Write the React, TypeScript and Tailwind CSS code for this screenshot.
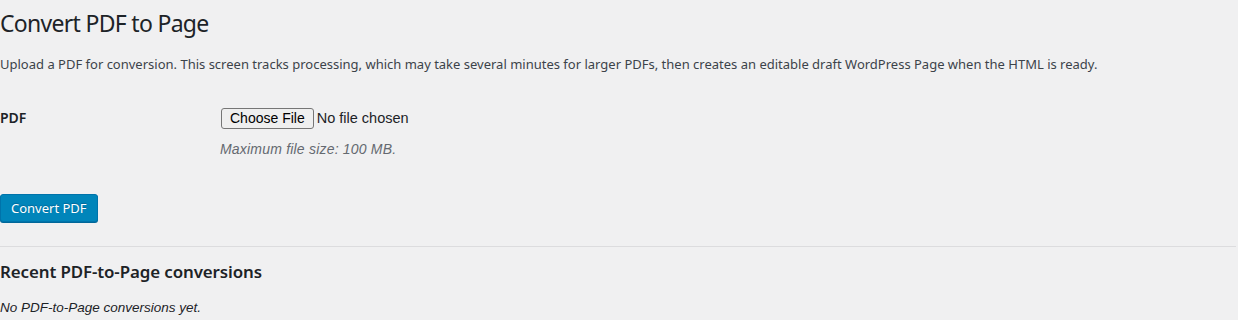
export default function App() {
  return (
    <div
      className="min-h-[320px] w-full bg-[#f0f0f1] text-[13px] leading-[1.4em] text-[#3c434a]"
      style={{ fontFamily: '"Noto Sans", "Liberation Sans", Arial, sans-serif' }}
    >
      <div className="pr-[2px]">
        <h1 className="pt-[9px] pb-1 text-[23px] font-normal leading-[1.3] tracking-[-0.7px] text-[#1d2327]">
          Convert PDF to Page
        </h1>
        <p className="mt-[12px] mb-[16px]">
          Upload a PDF for conversion. This screen tracks processing, which may take several minutes for larger PDFs, then creates an editable draft WordPress Page when the HTML is ready.
        </p>
        <div className="flex">
          <div className="w-[210px] shrink-0 py-5 pr-2.5 text-[14px] font-semibold leading-[18.2px] text-[#1d2327]">
            PDF
          </div>
          <div className="py-[15px] px-2.5">
            <div
              className="flex h-[28px] items-center text-[14px] text-[#1d2327]"
              style={{ fontFamily: '"Liberation Sans", Arial, sans-serif' }}
            >
              <span className="ml-px rounded-[3px] border border-[#767676] bg-[#efefef] px-[8px] py-[1px] leading-[17px] text-black">
                Choose File
              </span>
              <span className="ml-[3px] text-[14.5px]">No file chosen</span>
            </div>
            <p
              className="mt-[8px] text-[14px] italic leading-[18.2px] tracking-[0.2px] text-[#646970]"
              style={{ fontFamily: '"Liberation Sans", Arial, sans-serif' }}
            >
              Maximum file size: 100 MB.
            </p>
          </div>
        </div>
        <div className="mt-[21px]">
          <button className="h-[28px] rounded-[3px] border border-[#0073aa] bg-[#0085ba] px-2.5 text-[13px] leading-[26px] text-white shadow-[0_1px_0_#006799] [text-shadow:0_-1px_1px_#006799]">
            Convert PDF
          </button>
        </div>
        <hr className="mt-[24px] border-t border-[#dcdcde]" />
        <h2 className="mt-[14px] text-[16.9px] font-semibold leading-[22px] tracking-[-0.1px] text-[#1d2327]">
          Recent PDF-to-Page conversions
        </h2>
        <p
          className="mt-[16px] text-[13.5px] italic leading-[18.2px] text-[#1d2327]"
          style={{ fontFamily: '"Liberation Sans", Arial, sans-serif' }}
        >
          No PDF-to-Page conversions yet.
        </p>
      </div>
    </div>
  );
}
